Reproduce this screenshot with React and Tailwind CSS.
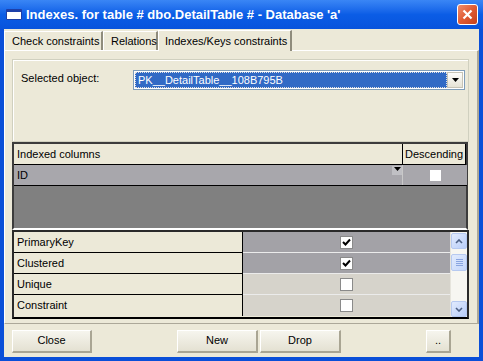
import React from "react";

const font = { fontFamily: '"Liberation Sans", Arial, sans-serif' };

const Check = ({ checked }) => (
  <div className="w-[13px] h-[13px] bg-white border border-[#8a8a8a] flex items-center justify-center">
    {checked && (
      <svg width="9" height="9" viewBox="0 0 9 9">
        <path d="M1 4 L3.5 6.5 L8 1.5" stroke="#000" strokeWidth="2" fill="none" />
      </svg>
    )}
  </div>
);

const Btn = ({ label, w }) => (
  <div
    className={`${w} h-[23px] flex items-center justify-center text-[11px] text-black bg-gradient-to-b from-[#f6f5ee] to-[#e4e1d2] border-t border-l border-white border-r-2 border-b-2 border-r-[#a9a593] border-b-[#a9a593]`}
  >
    {label}
  </div>
);

const Tab = ({ label, active, w }) =>
  active ? (
    <div className={`${w} h-[21px] bg-[#ECE9D8] border-l border-t border-white border-r-2 border-r-[#8f8c7c] flex items-start pl-[6px] pt-[2px] text-[11px] relative -mb-px`}>
      {label}
    </div>
  ) : (
    <div className={`${w} h-[19px] bg-[#ECE9D8] border-l border-t border-white border-r-2 border-r-[#8f8c7c] flex items-center pl-[7px] text-[11px]`}>
      {label}
    </div>
  );

const PropRow = ({ label, checked, dark, last }) => (
  <div className={`flex h-[21px] ${last ? "" : "border-b"} border-black`}>
    <div className="w-[229px] bg-[#ECE9D8] border-r border-black flex items-center pl-[3px] text-[11px]">
      {label}
    </div>
    <div
      className={`flex-1 flex items-center justify-center ${
        dark ? "bg-[#a3a2a7]" : "bg-[#d6d3cb]"
      } ${last ? "" : "-mb-px border-b border-[#ebebeb]"}`}
    >
      <Check checked={checked} />
    </div>
  </div>
);

export default function App() {
  return (
    <div className="w-[483px] h-[361px] bg-[#0a4fd8] flex flex-col text-black" style={font}>
      {/* title bar */}
      <div className="h-[29px] flex items-center bg-gradient-to-b from-[#3a86f5] via-[#0b5de6] to-[#0853dc] pl-[6px] pr-[5px]">
        <div className="w-[16px] h-[11px] bg-white border-t-[3px] border-[#1d3fa8] border-x border-b rounded-[1px]" />
        <div className="ml-[4px] text-white font-bold text-[13px] tracking-[0px] flex-1 whitespace-nowrap">
          Indexes. for table # dbo.DetailTable # - Database 'a'
        </div>
        <div className="w-[21px] h-[21px] rounded-[3px] border border-white bg-gradient-to-br from-[#ef8d6c] via-[#e05a33] to-[#c5401c] flex items-center justify-center">
          <svg width="11" height="11" viewBox="0 0 11 11">
            <path d="M1.5 1.5 L9.5 9.5 M9.5 1.5 L1.5 9.5" stroke="#fff" strokeWidth="2.2" />
          </svg>
        </div>
      </div>

      {/* body */}
      <div className="flex-1 mx-[4px] mb-[4px] bg-[#ECE9D8] flex flex-col">
        <div className="h-[21px] flex items-end">
          <Tab label="Check constraints" w="w-[99px]" />
          <Tab label="Relations" w="w-[55px]" />
          <Tab label="Indexes/Keys constraints" w="w-[134px]" active />
        </div>

        {/* tab page */}
        <div className="h-[274px] border-t border-l border-white border-r-2 border-r-[#aca899] border-b border-b-[#aca899] px-[7px] pt-[8px] flex flex-col">
          {/* selected object frame */}
          <div className="h-[83px] border border-[#d0d0bf] shadow-[inset_1px_1px_0_#fff] relative mr-[1px]">
            <div className="absolute left-[8px] top-[10px] text-[11px]">Selected object:</div>
            <div className="absolute left-[120px] top-[10px] w-[332px] h-[20px] border border-[#7f9db9] bg-white p-[1px] flex">
              <div className="flex-1 bg-[#316ac5] outline-1 outline-dotted outline-[#e0e0e0] -outline-offset-1 text-white text-[11px] flex items-center pl-[3px]">
                PK__DetailTable__108B795B
              </div>
              <div className="w-[16px] bg-gradient-to-b from-[#fdfdfb] to-[#e6e3d6] border border-[#c7c4b6] flex items-center justify-center">
                <svg width="7" height="4" viewBox="0 0 7 4">
                  <path d="M0 0 H7 L3.5 4 Z" fill="#000" />
                </svg>
              </div>
            </div>
          </div>

          {/* indexed columns grid */}
          <div className="h-[88px] mr-[2px] border-2 border-[#3c3c3c] bg-[#808080] flex flex-col border-b-white">
            <div className="h-[21px] flex bg-[#ECE9D8] border-b border-black">
              <div className="w-[389px] border-r border-black pl-[3px] flex items-center text-[11px]">Indexed columns</div>
              <div className="w-[63px] flex items-center pl-[2px] text-[11px] border-r border-black">Descending</div>
            </div>
            <div className="h-[21px] flex bg-[#a8a7ac] border-b border-black w-[453px]">
              <div className="w-[389px] border-r border-[#c9c9c9] pl-[3px] flex items-center text-[11px] relative">
                ID
                <div className="absolute right-0 top-[1px] w-[10px] h-[9px] bg-[#c0c0c4] flex items-start justify-center pt-[1px]">
                  <svg width="7" height="4" viewBox="0 0 7 4">
                    <path d="M0 0 H7 L3.5 4 Z" fill="#000" />
                  </svg>
                </div>
              </div>
              <div className="flex-1 flex items-center justify-center">
                <div className="w-[11px] h-[11px] bg-white" />
              </div>
            </div>
          </div>

          {/* properties grid */}
          <div className="h-[89px] mr-[1px] border-2 border-[#2a2a2a] border-b-black flex bg-[#ECE9D8]">
            <div className="flex-1 flex flex-col">
              <PropRow label="PrimaryKey" checked dark />
              <PropRow label="Clustered" checked dark />
              <PropRow label="Unique" />
              <PropRow label="Constraint" last />
            </div>
            <div className="w-[17px] bg-[#f7f6f1] flex flex-col items-center pt-[1px] border-l border-[#e6e4dc]">
              <div className="w-[16px] h-[16px] rounded-[2px] bg-gradient-to-br from-[#e2ebfd] to-[#b8cdf8] border border-[#b6c9f0] flex items-center justify-center">
                <svg width="8" height="5" viewBox="0 0 8 5">
                  <path d="M1 4 L4 1 L7 4" stroke="#4d6185" strokeWidth="1.6" fill="none" />
                </svg>
              </div>
              <div className="mt-[5px] w-[16px] h-[17px] rounded-[2px] bg-gradient-to-br from-[#e2ebfd] to-[#c3d5fa] border border-[#b6c9f0] flex flex-col items-center justify-center gap-[1px]">
                <div className="w-[7px] h-px bg-[#8aa5e0]" />
                <div className="w-[7px] h-px bg-[#8aa5e0]" />
                <div className="w-[7px] h-px bg-[#8aa5e0]" />
                <div className="w-[7px] h-px bg-[#8aa5e0]" />
              </div>
              <div className="flex-1" />
              <div className="w-[16px] h-[16px] rounded-[2px] bg-gradient-to-br from-[#e2ebfd] to-[#b8cdf8] border border-[#b6c9f0] flex items-center justify-center">
                <svg width="8" height="5" viewBox="0 0 8 5">
                  <path d="M1 1 L4 4 L7 1" stroke="#4d6185" strokeWidth="1.6" fill="none" />
                </svg>
              </div>
            </div>
          </div>
        </div>

        {/* buttons */}
        <div className="flex-1 flex items-center pl-[8px] pr-[28px] pt-[1px]">
          <Btn label="Close" w="w-[80px]" />
          <div className="w-[85px]" />
          <Btn label="New" w="w-[81px]" />
          <div className="w-[2px]" />
          <Btn label="Drop" w="w-[81px]" />
          <div className="flex-1" />
          <Btn label=".." w="w-[25px]" />
        </div>
      </div>
    </div>
  );
}
